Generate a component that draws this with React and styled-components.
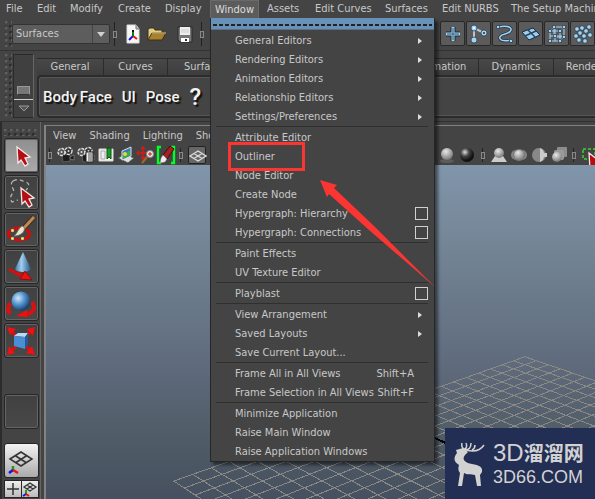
import React from "react";
import styled, { createGlobalStyle, css } from "styled-components";

const UI_FONT = '"DejaVu Sans Condensed", "DejaVu Sans", sans-serif';

const GlobalStyle = createGlobalStyle`
  *, *::before, *::after { box-sizing: border-box; }
  html, body { margin: 0; background: #444; overflow: hidden; }
  button, select { font: inherit; color: inherit; padding: 0; margin: 0; border: 0; background: none; border-radius: 0; }
  svg { display: block; flex: none; }
`;

const Shell = styled.div`
  position: relative;
  display: flex;
  flex-direction: column;
  height: 100vh;
  overflow: hidden;
  background: #444;
  color: #c8c8c8;
  font: 11px/14px ${UI_FONT};
  white-space: nowrap;
`;

/* Main menu bar */
const MenuBar = styled.nav`
  flex: none;
  display: flex;
  height: 18px;
  gap: 2px;
`;
const MenuTab = styled.button`
  flex: none;
  width: ${(p) => p.$w}px;
  height: 18px;
  text-align: left;
  && { padding: 0 0 0 6px; }
  ${(p) => p.$open && css`
    && { background: #5c5c5c; color: #dcdcdc; padding-left: 4px; border: 1px solid #6a6a6a; border-bottom: 0; }
  `}
`;

/* Status line */
const StatusLine = styled.div`
  flex: none;
  display: flex;
  align-items: center;
  height: 33px;
  padding: 0 0 0 5px;
  border-bottom: 1px solid #333;
`;
const Grip = styled.div`
  flex: none;
  width: ${(p) => (p.$wide ? "34px" : "7px")};
  height: ${(p) => (p.$wide ? "7px" : "auto")};
  align-self: ${(p) => (p.$wide ? "center" : "stretch")};
  margin: ${(p) => (p.$wide ? "0" : "3px 0")};
  background:
    radial-gradient(circle at 1px 1px, #606060 1px, transparent 2px) 0 0 / 6px 6px,
    radial-gradient(circle at 1px 1px, #2d2d2d 1px, transparent 2px) 4px 4px / 6px 6px;
`;
const ModeBox = styled.div`
  position: relative;
  flex: none;
  width: 98px;
  height: 20px;
  border: 1px solid #333;
  border-radius: 2px;
  background: #5d5d5d;
`;
const ModeSelect = styled.select`
  appearance: none;
  width: 100%;
  height: 18px;
  && { padding: 0 0 0 3px; }
`;
const ModeArrow = styled.span`
  position: absolute;
  inset: 0 0 0 auto;
  display: grid;
  place-items: center;
  width: 17px;
  border-left: 1px solid #444;
  pointer-events: none;
`;
const Splitter = styled.span`
  flex: none;
  width: 4px;
  height: ${(p) => p.$h}px;
  margin: ${(p) => p.$m};
  background: linear-gradient(#222, #222) 1px 0 / 1px 100% no-repeat;
  display: grid;
  place-items: center;
  &::after {
    content: "";
    width: 4px;
    height: 7px;
    border: 1px solid #888;
    background: #444;
  }
`;
const IconButton = styled.button`
  flex: none;
  display: grid;
  place-items: center;
  width: ${(p) => p.$w}px;
  height: 20px;
`;
const Spacer = styled.div`
  flex: 0 0 ${(p) => p.$w}px;
`;
const MaskButtons = styled.div`
  display: flex;
  gap: 1px;
  padding-bottom: 1px;
`;
const MaskButton = styled.button`
  flex: none;
  display: grid;
  place-items: center;
  width: 25px;
  height: 25px;
  && { border: 1px solid #292929; border-radius: 2px; background: #5b5b5b; }
`;

/* Shelf */
const Shelf = styled.section`
  flex: none;
  display: flex;
  height: 71px;
  padding-left: 5px;
  border-bottom: 1px solid #303030;
`;
const ShelfSide = styled.div`
  flex: none;
  display: flex;
  flex-direction: column;
  align-items: center;
  justify-content: flex-end;
  gap: 4px;
  width: 21px;
  margin: 3px 3px 3px 1px;
  border: 1px solid #2a2a2a;
  border-right-color: #666;
  background: #404040;
`;
const ShelfSwatch = styled.button`
  width: 13px;
  height: 9px;
  && { background: #777; border: 1px solid #999; border-bottom-color: #333; }
`;
const ShelfMenu = styled.button`
  display: grid;
  place-items: center;
  width: 19px;
  height: 18px;
  && { border-top: 1px solid #ccc; }
`;
const ShelfMain = styled.div`
  flex: 1;
  min-width: 0;
  display: flex;
  flex-direction: column;
  padding: 7px 0 3px;
`;
const ShelfTabs = styled.div`
  display: flex;
  height: 17px;
  overflow: hidden;
`;
const ShelfTab = styled.button`
  flex: none;
  width: ${(p) => p.$w}px;
  height: 17px;
  && {
    border: solid #2b2b2b;
    border-width: 1px 1px 0 0;
    background: linear-gradient(#484848, #3d3d3d);
  }
`;
const ShelfBody = styled.div`
  flex: 1;
  display: flex;
  align-items: center;
  gap: 3px;
  padding: 0 4px;
  border: 2px solid #2c2c2c;
  border-right: 0;
  border-radius: 4px 0 0 4px;
  box-shadow: inset 1px 1px 0 #555, inset 0 -1px 0 #555;
`;
const ShelfItem = styled.button`
  && {
    font: 500 ${(p) => (p.$big ? 24 : 15)}px/30px Roboto, sans-serif;
    margin-right: ${(p) => p.$gap || 0}px;
    color: #f4f4f4;
    text-shadow: 2px 2px 1px #111;
  }
`;

/* Workspace */
const Workspace = styled.div`
  flex: 1;
  min-height: 0;
  display: flex;
`;
const ToolBox = styled.aside`
  flex: none;
  display: flex;
  flex-direction: column;
  align-items: center;
  gap: 2px;
  width: 41px;
  padding: 7px 2px 0 4px;
  overflow: hidden;
  border-right: 1px solid #666;
  box-shadow: inset 2px 0 0 #2c2c2c;
`;
const Tool = styled.button`
  flex: none;
  display: grid;
  place-items: center;
  width: 35px;
  height: 35px;
  && {
    margin: ${(p) => p.$m || 0};
    border: 1px solid #262626;
    border-radius: 3px;
    box-shadow: inset 0 0 0 1px #646464;
    background: ${(p) => (p.$active ? "linear-gradient(#8e8e8e,#aaa)" : "linear-gradient(#404040,#494949)")};
  }
`;
const ViewTool = styled(Tool)`
  && { box-shadow: none; background: linear-gradient(#f3f3f3, #aaa); }
`;
const LayoutPair = styled.div`
  flex: none;
  display: flex;
  gap: 1px;
  width: 35px;
  border: 1px solid #262626;
  background: #262626;
`;
const LayoutButton = styled.button`
  display: grid;
  place-items: center;
  flex: 1;
  height: 16px;
  && { background: linear-gradient(#eee, #bbb); }
`;
const Panel = styled.main`
  flex: 1;
  min-width: 0;
  display: flex;
  flex-direction: column;
  margin: 3px 0 0 3px;
  border: solid #828282;
  border-width: 1px 0 0 2px;
`;
const PanelMenu = styled.div`
  flex: none;
  display: flex;
  align-items: center;
  gap: 13px;
  height: 19px;
  padding-left: 7px;
`;
const PanelBar = styled.div`
  flex: none;
  display: flex;
  align-items: center;
  height: 20px;
  padding-left: 2px;
  overflow: hidden;
`;
const PressedIcon = styled(IconButton)`
  && { height: 18px; border: 1px solid #222; border-radius: 2px; background: #666; }
`;
const Viewport = styled.div`
  flex: 1;
  min-height: 0;
  background: linear-gradient(#8195ab 0%, #748696 23%, #5f6b7c 60%, #525e69 78%, #465060 100%);
  svg { width: 100%; height: 100%; }
`;

/* Window drop-down, floating over the page */
const Menu = styled.div`
  position: absolute;
  top: 18px;
  left: 210px;
  width: 225px;
  border: 1px solid #262626;
  border-top: 0;
  background: #444;
  box-shadow: 3px 3px 3px rgba(0, 0, 0, 0.5);
`;
const TearOff = styled.button`
  display: flex;
  align-items: center;
  width: 100%;
  height: 13px;
  && { padding: 0 2px; background: linear-gradient(#6791b9 11px, #5b7085 11px 12px, #444 12px); }
  &::after {
    content: "";
    flex: 1;
    height: 2px;
    background: repeating-linear-gradient(90deg, #222 0 4px, transparent 4px 6px);
  }
`;
const MenuRow = styled.div`
  display: flex;
  align-items: center;
  height: 19px;
  padding-right: 6px;
`;
const MenuItem = styled.button`
  flex: 1;
  display: flex;
  align-items: center;
  justify-content: space-between;
  height: 19px;
  && { padding: 0 6px 0 24px; }
`;
const Shortcut = styled.kbd`
  font: inherit;
  margin-right: 8px;
`;
const OptionBox = styled.button`
  width: 13px;
  height: 13px;
  && { border: 1px solid #d0d0d0; }
`;
const Divider = styled.hr`
  height: 2px;
  margin: 0 6px 0 5px;
  border: 0;
  border-top: 1px solid #2f2f2f;
`;
const Highlight = styled.div`
  position: absolute;
  top: 124px;
  left: 17px;
  width: 77px;
  height: 29px;
  border: 3px solid #fb3532;
  pointer-events: none;
`;
const Pointer = styled.svg`
  position: absolute;
  top: 162px;
  left: 109px;
  pointer-events: none;
`;

const Watermark = styled.div`
  position: absolute;
  right: 0;
  bottom: 0;
  display: flex;
  align-items: center;
  gap: 6px;
  width: 150px;
  height: 71px;
  padding-left: 8px;
  background: #222e54;
  color: #d2d2d2;
`;
const WatermarkText = styled.div`
  display: flex;
  flex-direction: column;
`;
const BrandTop = styled.div`
  display: flex;
  align-items: center;
  height: 26px;
  font: 700 20px/26px "Noto Sans CJK SC", sans-serif;
  span { font: 24px/26px "Liberation Sans", sans-serif; }
`;
const BrandBottom = styled.div`
  font: 18px/22px "Liberation Sans", sans-serif;
`;

/* Perspective floor grid */
const GRID = 24;
const project = (u, v) => {
  const w = 1 - 0.01 * (u + v);
  return [
    (478 + (11.4 * v - 11.1 * u) / w).toFixed(1),
    (192 + (3.9 * v + 3.93 * u) / w).toFixed(1),
  ];
};
const line = (a, b) => `M${project(...a)}L${project(...b)}`;
const steps = Array.from({ length: GRID + 1 }, (_, i) => i);
const gridPath = steps.map((i) => line([i, 0], [i, GRID]) + line([0, i], [GRID, i])).join("");

const FloorGrid = () => (
  <svg viewBox="0 0 548 334" preserveAspectRatio="xMidYMax slice" fill="none" shapeRendering="crispEdges" aria-hidden="true">
    <path d={gridPath} stroke="#8a8885" />
    <path d={line([12, 0], [12, GRID])} stroke="#000" strokeWidth="2" />
  </svg>
);

const Svg = ({ w = 20, h = w, children }) => (
  <svg width={w} height={h} viewBox={`0 0 ${w} ${h}`} fill="none" aria-hidden="true">{children}</svg>
);

const NewScene = () => (
  <Svg w={16} h={20}>
    <path d="M2 1h9l3 4v14H2z" fill="#f8f8f8" stroke="#ddd" />
    <path d="M11 1v4h3" fill="#bbb" stroke="#777" />
    <path d="M8 12V6" stroke="#111" strokeWidth="2" />
    <path d="M8 12l-4 4" stroke="#11e" strokeWidth="2" />
    <path d="M8 12l4 3" stroke="#e11" strokeWidth="2" />
    <path d="M8 12V8" stroke="#0a7a20" strokeWidth="2" />
  </Svg>
);
const OpenFolder = () => (
  <Svg w={20} h={16}>
    <path d="M1 14V3l2-1h4l1 2h7v3" fill="#e3cd84" stroke="#3c3018" />
    <path d="M1 14L5 7h14l-4 7z" fill="#a8822d" stroke="#3c3018" />
    <path d="M5 7h14" stroke="#e3cd84" />
  </Svg>
);
const SaveDisk = () => (
  <Svg w={16} h={17}>
    <path d="M1 1h14v15H3l-2-2z" fill="#777" stroke="#2a2a2a" />
    <path d="M3 1h10v8H3z" fill="#eee" />
    <path d="M4 4h8M4 6h8" stroke="#ccc" />
    <path d="M4 12h8v4H4z" fill="#fff" />
    <path d="M8 13h2v2H8z" fill="#333" />
  </Svg>
);

const BLUE = "#a3d3f1";
const dot = (x, y, r = 2) => (
  <circle key={`${x}-${y}`} cx={x} cy={y} r={r} fill={BLUE} stroke="#1f3447" strokeWidth="0.7" />
);
const box = (x, y) => (
  <path key={`${x}-${y}`} d={`M${x - 1.5} ${y - 1.5}h3v3h-3z`} fill={BLUE} stroke="#1f3447" strokeWidth="0.7" />
);
const maskIcons = {
  Handles: <><path d="M10 3v14M3 10h14" stroke="#17293a" strokeWidth="5" /><path d="M10 3v14M3 10h14" stroke={BLUE} strokeWidth="3" /><path d="M10 4v12M4 10h12" stroke="#34576f" /></>,
  Joints: <><path d="M5 4v12M5 4l10 5" stroke="#b6c5d0" strokeWidth="2" />{dot(5, 4, 3)}{dot(5, 16, 3)}{dot(15, 9, 3)}<circle cx="15" cy="9" r="1" fill="#234" /><circle cx="5" cy="4" r="1" fill="#fff" /></>,
  Curves: <><path d="M3 3c16-3 16 5 7 7s-6 9 6 6" stroke="#1e3447" strokeWidth="3" /><path d="M3 3c16-3 16 5 7 7s-6 9 6 6" stroke={BLUE} strokeWidth="1.5" />{box(3, 3)}{box(16, 17)}</>,
  Surfaces: <><path d="M1 8l11-4 7 7-11 5z" fill="#9ccdf0" stroke="#172b3d" /><path d="M7 6l7 7M4 12l11-5" stroke="#284862" strokeWidth="1.5" /></>,
  Deformations: <><path d="M3 7h10v10H3zM7 3h10v10H7zM3 7l4-4M13 7l4-4M13 17l4-4M8 5v12M3 12h12" stroke={BLUE} />{[[3, 7], [13, 7], [3, 17], [13, 17], [7, 3], [17, 3], [17, 13], [8, 12]].map((p) => box(...p))}</>,
  Dynamics: <>{[[4, 5], [9, 4], [16, 3], [13, 7], [7, 9], [3, 12], [11, 12], [17, 11], [6, 16], [12, 17]].map((p) => dot(...p, 2.3))}</>,
};

/* Panel toolbar icons */
const Camera = () => (
  <>
    <path d="M6 10l8-1v7l-7 1z" fill="#1c1c1c" stroke="#777" strokeWidth=".6" />
    <path d="M14 12l4-2v5l-4-1z" fill="#181818" stroke="#999" strokeWidth=".6" />
    <circle cx="5.500" cy="7" r="3.500" fill="#555" stroke="#ddd" strokeWidth="1.400" strokeDasharray="3 1" />
    <circle cx="12.500" cy="6" r="3.500" fill="#333" stroke="#ddd" strokeWidth="1.400" strokeDasharray="3 1" />
    <circle cx="5.500" cy="7" r="1" fill="#ddd" />
    <circle cx="12.500" cy="6" r="1" fill="#ddd" />
  </>
);
const panelIcons = {
  "Select camera": <Camera />,
  "Camera attributes": <><Camera /><path d="M10 7h7v10h-7z" fill="#eee" stroke="#222" /><path d="M12 9h4M12 11h4M12 13h4M12 15h4" stroke="#555" /></>,
  Bookmarks: <><path d="M3 4h14v12H3z" fill="#eee" stroke="#ddd" /><path d="M5 6h4v8H5z" stroke="#aaa" /><path d="M11 3h4v11l-2-2-2 2z" fill="#1b9a2a" stroke="#075010" /></>,
  "Image plane": <><path d="M2 13l10 5 6-5-9-4z" fill="#ddd" stroke="#555" /><path d="M6 6l9-4v9l-9 4z" fill="#3478c8" stroke="#ddd" /><path d="M7 11l7-6v5l-7 4z" fill="#3bb032" /><circle cx="9" cy="9" r="2" fill="#edd53a" /></>,
  "2D pan and zoom": <><path d="M7 2v12M1 8h12M5 4l2-2 2 2M5 12l2 2 2-2M3 6L1 8l2 2" stroke="#e01515" strokeWidth="1.300" /><path d="M11 12l-5 6" stroke="#a5652a" strokeWidth="2" /><circle cx="14" cy="9" r="3.500" fill="#eee" stroke="#888" /><path d="M14 7v4M12 9h4" stroke="#d11" /></>,
  "Grease pencil": <><path d="M5 2H2v16h3M15 2h3v16h-3" stroke="#0f2" strokeWidth="2.400" /><path d="M7 10l7-9 4 3-7 10z" fill="#a32222" stroke="#4c0808" /><path d="M7 10l4 4-2 3-5 1 1-5z" fill="#eee" stroke="#777" strokeWidth=".5" /></>,
};
const GridGlyph = () => (
  <path d="M1 9l8-5 8 5-8 5zM5 6.500l8 5M13 6.500l-8 5" stroke="#ddd" strokeWidth="1.300" />
);

const Shades = () => (
  <svg width="0" height="0" aria-hidden="true">
    <defs>
      <radialGradient id="pearl" cx=".4" cy=".3" r=".7"><stop stopColor="#e8e8e8" /><stop offset="1" stopColor="#777" /></radialGradient>
      <radialGradient id="coal" cx=".35" cy=".3" r=".6"><stop stopColor="#ddd" /><stop offset=".5" stopColor="#444" /><stop offset="1" stopColor="#111" /></radialGradient>
      <radialGradient id="azure" cx=".35" cy=".35" r=".7"><stop stopColor="#cfe8fb" /><stop offset=".5" stopColor="#5391cb" /><stop offset="1" stopColor="#153a66" /></radialGradient>
      <linearGradient id="cone"><stop stopColor="#3a78ad" /><stop offset=".4" stopColor="#a3cdec" /><stop offset="1" stopColor="#1f5586" /></linearGradient>
    </defs>
  </svg>
);
const displayIcons = {
  "Default material": <><ellipse cx="10" cy="16" rx="7" ry="2" fill="#5c5c5c" /><circle cx="10" cy="9" r="6" fill="url(#pearl)" /></>,
  "Use all lights": <circle cx="10" cy="10" r="7" fill="url(#coal)" />,
};
const shadingIcons = {
  Shadows: <><path d="M2 17l4-6h8l4 6z" fill="#ccc" /><circle cx="10" cy="8" r="5" fill="url(#pearl)" /></>,
  "Screen-space occlusion": <><rect x="2" y="5" width="16" height="10" rx="5" fill="#858585" /><circle cx="10" cy="10" r="5.500" fill="url(#pearl)" stroke="#777" /></>,
  "Motion blur": <><circle cx="10" cy="10" r="7" fill="#888" /><path d="M11 3v14l3-2 1-3h3V8h-3l-1-3z" fill="#ccc" /></>,
  Multisample: <><rect x="8" y="2" width="10" height="10" rx="1" fill="#8d8d8d" /><rect x="5" y="5" width="10" height="10" rx="2" fill="#9a9a9a" /><circle cx="8" cy="12" r="5" fill="url(#pearl)" /></>,
};

const Cursor = ({ x = 0, y = 0 }) => (
  <path transform={`translate(${x} ${y})`} d="M0 0l13 10-5 1 3 6-3 2-4-6-3 3z" fill="#b40d12" stroke="#f4e8e8" strokeWidth="1.300" />
);
const toolIcons = {
  Lasso: <><path d="M8 4c5-3 9 0 13 1 5 2 2 6 0 8M8 4c-5 4 3 8 0 12-3 3-3 6-1 9l6-2" stroke="#b5b5b5" strokeWidth="1.300" strokeDasharray="4 3" /><Cursor x={16} y={11} /></>,
  "Paint selection": <><ellipse cx="14" cy="20" rx="10.500" ry="6" stroke="#d40b0b" strokeWidth="3" /><path d="M29 3L17 16" stroke="#4c2b14" strokeWidth="5" /><path d="M29 3L18 15" stroke="#b98a5c" strokeWidth="3" /><path d="M19 13c2 5-4 9-10 9 4-3 4-8 8-10z" fill="#eee6d2" stroke="#776" /><path d="M6 15h3v3H6zM6 23h3v3H6zM16 23h3v3h-3z" fill="#ffef8a" stroke="#554" strokeWidth=".5" /></>,
  Move: <><path d="M18 1l8 17c-2 4-14 4-16 0z" fill="url(#cone)" /><path d="M4 17l16 7-2 4L3 19z" fill="#d80d0d" /><path d="M20 20l7 9-12-1z" fill="#f01010" stroke="#700" strokeWidth=".6" /></>,
  Rotate: <><path d="M5 15c-4 6 0 11 0 11M27 14c6 9-3 12-7 13" stroke="#dc1010" strokeWidth="4" /><circle cx="16" cy="13" r="9.500" fill="url(#azure)" /><path d="M11 28l11-6v7z" fill="#f01010" /></>,
  Scale: <><path d="M6 6l20 20M26 6L6 26" stroke="#d81010" strokeWidth="3" /><path d="M2 2l9 2-6 6zM30 2l-2 9-6-7zM2 30l2-9 6 7zM30 30l-9-2 6-7z" fill="#f01010" /><path d="M9 11l4-3h10l-3 4z" fill="#b8dbf7" /><path d="M9 11l11 1v12L9 21z" fill="#4a8fd6" /><path d="M20 12l3-4v11l-3 5z" fill="#235b99" /></>,
};
const Axes = () => (
  <><path d="M8 26v-5" stroke="#18a018" strokeWidth="2.500" /><path d="M8 25l-4 3" stroke="#11e" strokeWidth="2.500" /><path d="M8 25l5 3" stroke="#e11" strokeWidth="2.500" /></>
);

const menus = [["File", 29], ["Edit", 31], ["Modify", 46], ["Create", 45], ["Display", 49], ["Window", 49, true], ["Assets", 46], ["Edit Curves", 68], ["Surfaces", 55], ["Edit NURBS", 67], ["The Setup Machine", 110]];
const leftTabs = [["General", 67], ["Curves", 64], ["Surfaces", 76]];
const rightTabs = [["Animation", 75], ["Dynamics", 75], ["Rendering", 75]];
const menuGroups = [
  [["General Editors", "sub"], ["Rendering Editors", "sub"], ["Animation Editors", "sub"], ["Relationship Editors", "sub"], ["Settings/Preferences", "sub"]],
  [["Attribute Editor"], ["Outliner"], ["Node Editor"], ["Create Node"], ["Hypergraph: Hierarchy", "box"], ["Hypergraph: Connections", "box"]],
  [["Paint Effects"], ["UV Texture Editor"]],
  [["Playblast", "box"]],
  [["View Arrangement", "sub"], ["Saved Layouts", "sub"], ["Save Current Layout..."]],
  [["Frame All in All Views", "key", "Shift+A"], ["Frame Selection in All Views", "key", "Shift+F"]],
  [["Minimize Application"], ["Raise Main Window"], ["Raise Application Windows"]],
];

const IconSet = ({ icons }) => Object.entries(icons).map(([name, art]) => (
  <IconButton key={name} $w={20} aria-label={name}><Svg>{art}</Svg></IconButton>
));
const TabSet = ({ tabs }) => tabs.map(([name, w]) => <ShelfTab key={name} $w={w}>{name}</ShelfTab>);

const WindowMenu = () => (
  <Menu role="menu">
    <TearOff aria-label="Tear off menu" />
    {menuGroups.map((group, i) => (
      <React.Fragment key={i}>
        {i > 0 && <Divider />}
        {group.map(([label, kind, keys]) => (
          <MenuRow key={label}>
            <MenuItem role="menuitem">
              {label}
              {kind === "sub" && <Svg w={4} h={6}><path d="M0 0l4 3-4 3z" fill="#ddd" /></Svg>}
              {kind === "key" && <Shortcut>{keys}</Shortcut>}
            </MenuItem>
            {kind === "box" && <OptionBox aria-label={`${label} options`} />}
          </MenuRow>
        ))}
      </React.Fragment>
    ))}
    <Highlight />
    <Pointer width="116" height="108" viewBox="0 0 116 108" aria-hidden="true">
      <path d="M0 0L17 5l-3 3 40 38 61 61-66-57L9 14l-2 3z" fill="#fb3532" />
    </Pointer>
  </Menu>
);

const Brand = () => (
  <Watermark>
    <svg width="34" height="46" viewBox="0 0 34 46" fill="#d2d2d2" aria-hidden="true">
      <path d="M3 9l7-2 5 4-3 3c-4 5 1 8 7 9 7 1 11 3 10 8l-2 3 1 11h-4l-2-11c-4-1-8 0-11-2l-2 13H5l2-13c-2-2-2-5-1-8-5-3-6-7-2-12z" />
      <path d="M12 9C9 7 8 5 9 2M11 8c3 0 3-4 2-6M12 9c5 0 6-4 6-7M13 9c7 2 14 1 18-5M19 9c2-1 3-3 3-5" fill="none" stroke="#d2d2d2" strokeWidth="1.500" />
    </svg>
    <WatermarkText>
      <BrandTop><span>3D</span>溜溜网</BrandTop>
      <BrandBottom>3D66.COM</BrandBottom>
    </WatermarkText>
  </Watermark>
);

export default function App() {
  return (
    <Shell>
      <GlobalStyle />
      <MenuBar>
        {menus.map(([name, w, open]) => <MenuTab key={name} $w={w} $open={open}>{name}</MenuTab>)}
      </MenuBar>

      <StatusLine>
        <Grip />
        <ModeBox>
          <ModeSelect aria-label="Menu set" defaultValue="Surfaces"><option>Surfaces</option></ModeSelect>
          <ModeArrow><Svg w={8} h={5}><path d="M0 0h8L4 5z" fill="#d0d0d0" /></Svg></ModeArrow>
        </ModeBox>
        <Splitter $h={24} $m="0 6px 0 3px" />
        <IconButton $w={20} aria-label="New scene"><NewScene /></IconButton>
        <IconButton $w={28} aria-label="Open scene"><OpenFolder /></IconButton>
        <IconButton $w={28} aria-label="Save scene"><SaveDisk /></IconButton>
        <Splitter $h={24} $m="0 0 0 1px" />
        <Spacer $w={236} />
        <MaskButtons>
          {Object.entries(maskIcons).map(([name, art]) => (
            <MaskButton key={name} aria-label={name}><Svg>{art}</Svg></MaskButton>
          ))}
        </MaskButtons>
      </StatusLine>

      <Shelf>
        <Grip />
        <ShelfSide>
          <ShelfSwatch aria-label="Shelf tabs" />
          <ShelfMenu aria-label="Shelf menu"><Svg w={12} h={7}><path d="M1 1h10L6 6z" fill="#555" stroke="#999" /></Svg></ShelfMenu>
        </ShelfSide>
        <ShelfMain>
          <ShelfTabs>
            <TabSet tabs={leftTabs} />
            <Spacer $w={160} />
            <TabSet tabs={rightTabs} />
          </ShelfTabs>
          <ShelfBody>
            <ShelfItem>Body</ShelfItem>
            <ShelfItem $gap={7}>Face</ShelfItem>
            <ShelfItem $gap={7}>UI</ShelfItem>
            <ShelfItem $gap={7}>Pose</ShelfItem>
            <ShelfItem $big>?</ShelfItem>
          </ShelfBody>
        </ShelfMain>
      </Shelf>

      <Workspace>
        <ToolBox>
          <Grip $wide />
          <Tool $active aria-label="Select"><Svg w={32}><Cursor x={12} y={7} /></Svg></Tool>
          {Object.entries(toolIcons).map(([name, art]) => (
            <Tool key={name} aria-label={name}><Svg w={32}>{art}</Svg></Tool>
          ))}
          <Tool $m="34px 0 12px" aria-label="Last tool" />
          <ViewTool aria-label="Perspective view">
            <Svg w={32}>
              <path d="M5 14l11-7 11 7-11 7zM10 10.500l11 7M22 10.500l-11 7" stroke="#333" strokeWidth="1.500" />
              <Axes />
            </Svg>
          </ViewTool>
          <LayoutPair>
            <LayoutButton aria-label="Four view"><Svg w={14}><path d="M7 1v12M1 7h12" stroke="#333" strokeWidth="1.500" /></Svg></LayoutButton>
            <LayoutButton aria-label="Perspective and outliner"><Svg w={16}><path d="M2 6l6-4 6 4-6 4zM5 4l6 4M11 4L5 8" stroke="#333" strokeWidth="1.300" /><path d="M4 13V9" stroke="#18a018" strokeWidth="2" /><path d="M4 13l-3 2" stroke="#11e" strokeWidth="2" /><path d="M4 13l3 2" stroke="#e11" strokeWidth="2" /></Svg></LayoutButton>
          </LayoutPair>
        </ToolBox>

        <Panel>
          <PanelMenu>
            {["View", "Shading", "Lighting", "Show"].map((name) => <button key={name}>{name}</button>)}
          </PanelMenu>
          <PanelBar>
            <Splitter $h={14} $m="0 4px 0 0" />
            <IconSet icons={panelIcons} />
            <Splitter $h={14} $m="0 5px 0 3px" />
            <PressedIcon $w={18} aria-label="Grid"><Svg w={18}><GridGlyph /></Svg></PressedIcon>
            <Spacer $w={231} />
            <IconSet icons={displayIcons} />
            <Splitter $h={14} $m="0 4px" />
            <IconSet icons={shadingIcons} />
            <Splitter $h={14} $m="0 6px 0 3px" />
            <IconButton $w={20} aria-label="Isolate select">
              <Svg><path d="M1 4h12v10H1z" stroke="#39d82c" strokeWidth="1.500" strokeDasharray="3 2" /><Cursor x={7} y={8} /></Svg>
            </IconButton>
          </PanelBar>
          <Viewport><FloorGrid /></Viewport>
        </Panel>
      </Workspace>

      <WindowMenu />
      <Brand />
      <Shades />
    </Shell>
  );
}
